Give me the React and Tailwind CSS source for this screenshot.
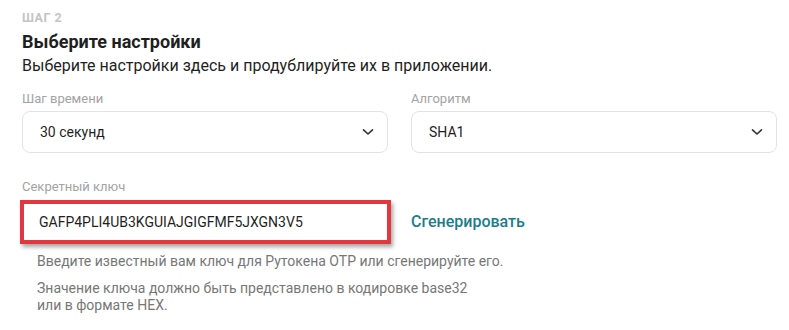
import React from "react";

function Chevron() {
  return (
    <svg width="12" height="8" viewBox="0 0 12 8" fill="none" className="shrink-0">
      <path d="M1.5 1.8 L6 6 L10.5 1.8" stroke="#333" strokeWidth="1.6" strokeLinecap="round" strokeLinejoin="round" />
    </svg>
  );
}

function Select({ label, value }) {
  return (
    <div className="flex flex-col flex-1">
      <div className="text-[13px] leading-[16px] text-[#a3a3a3] h-[20px]">{label}</div>
      <div className="h-[42px] rounded-[8px] border border-[#e3e3e6] bg-white flex items-center justify-between pl-[17px] pr-[13px]">
        <span className="text-[14px] text-[#1f1f1f]">{value}</span>
        <Chevron />
      </div>
    </div>
  );
}

export default function App() {
  return (
    <div
      className="w-[789px] h-[330px] bg-white pl-[22px] pr-[12px] pt-[10px] overflow-hidden"
      style={{ fontFamily: "Roboto, 'Noto Sans', sans-serif" }}
    >
      <div className="text-[12.5px] leading-[15px] font-bold tracking-[0.04em] text-[#c4c4c4] uppercase">Шаг 2</div>
      <div className="mt-[6px] text-[18px] leading-[22px] font-bold text-[#1f1f1f]">Выберите настройки</div>
      <div className="mt-[3px] text-[16px] leading-[20px] text-[#1f1f1f]">
        Выберите настройки здесь и продублируйте их в приложении.
      </div>
      <div className="mt-[15px] flex gap-[23px]">
        <Select label="Шаг времени" value="30 секунд" />
        <Select label="Алгоритм" value="SHA1" />
      </div>
      <div className="mt-[26px] text-[13px] leading-[16px] text-[#a3a3a3]">Секретный ключ</div>
      <div className="mt-[5px] flex items-center">
        <div className="-ml-[2px] w-[371px] h-[44px] border-[4px] border-[#e0383e] bg-white flex items-center pl-[15px] shadow-[2px_3px_4px_rgba(0,0,0,0.35)]">
          <span className="text-[14px] text-[#1f1f1f]">GAFP4PLI4UB3KGUIAJGIGFMF5JXGN3V5</span>
        </div>
        <div className="ml-[20px] text-[16px] font-medium text-[#1a7d8c]">Сгенерировать</div>
      </div>
      <div className="mt-[9px] pl-[15px] text-[14px] leading-[17px] text-[#777]">
        <div>Введите известный вам ключ для Рутокена OTP или сгенерируйте его.</div>
        <div className="mt-[10px]">Значение ключа должно быть представлено в кодировке base32</div>
        <div>или в формате HEX.</div>
      </div>
    </div>
  );
}
